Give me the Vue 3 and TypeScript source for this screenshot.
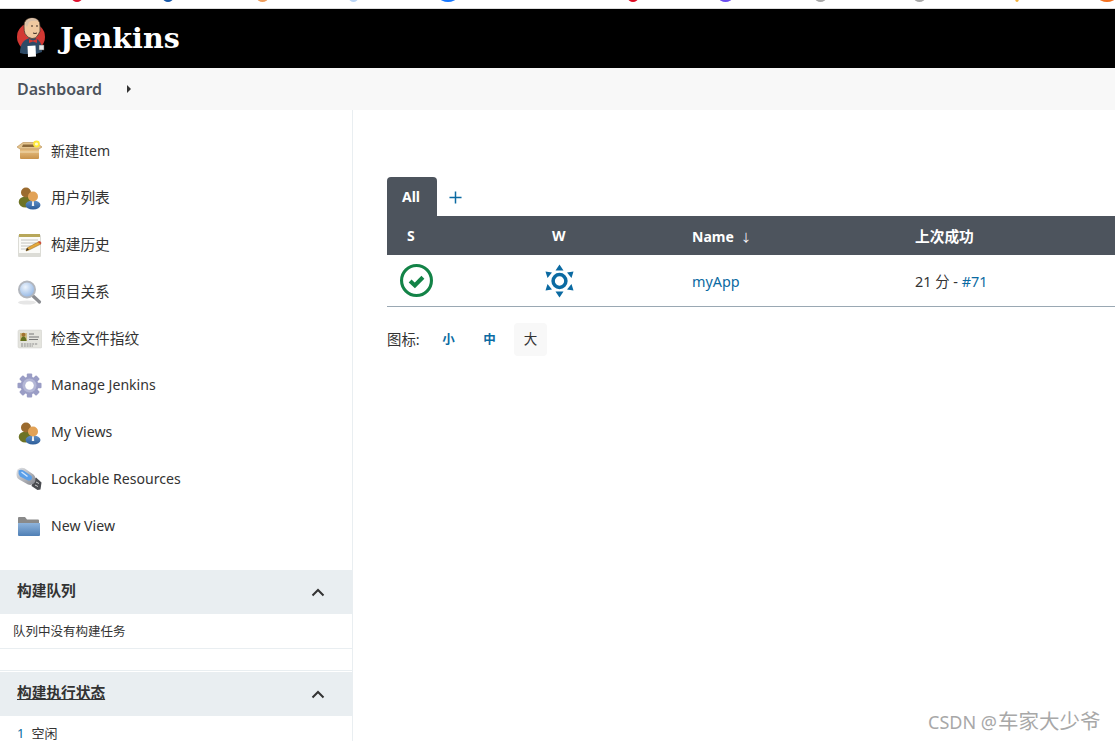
<script setup lang="ts">
const tabDots = [
  { x: 77, w: 10, c: '#e0102d' },
  { x: 168, w: 10, c: '#1657a8' },
  { x: 262, w: 11, c: '#ee9d5c' },
  { x: 353, w: 9, c: '#b9d4f5' },
  { x: 448, w: 16, c: '#1677ff' },
  { x: 633, w: 10, c: '#dd0a22' },
  { x: 725, w: 13, c: '#6a4cf0' },
  { x: 820, w: 11, c: '#a8a8a8' },
  { x: 919, w: 11, c: '#a8a8a8' },
  { x: 1017, w: 4, c: '#f4b23c' },
  { x: 1107, w: 16, c: '#f4701f' },
]

const tasks = [
  { icon: 'i-box', label: '新建Item', zh: false },
  { icon: 'i-users', label: '用户列表', zh: true },
  { icon: 'i-notepad', label: '构建历史', zh: true },
  { icon: 'i-search', label: '项目关系', zh: true },
  { icon: 'i-card', label: '检查文件指纹', zh: true },
  { icon: 'i-gear', label: 'Manage Jenkins', zh: false },
  { icon: 'i-users', label: 'My Views', zh: false },
  { icon: 'i-usb', label: 'Lockable Resources', zh: false },
  { icon: 'i-folder', label: 'New View', zh: false },
]
</script>

<template>
  <div class="page">
    <svg class="sprite" width="0" height="0" aria-hidden="true">
      <defs>
        <linearGradient id="g-box" x1="0" y1="0" x2="0" y2="1">
          <stop offset="0" stop-color="#ecc98f" />
          <stop offset="1" stop-color="#c9924a" />
        </linearGradient>
        <linearGradient id="g-blue" x1="0" y1="0" x2="0" y2="1">
          <stop offset="0" stop-color="#5f8fc6" />
          <stop offset="1" stop-color="#2c5c98" />
        </linearGradient>
        <linearGradient id="g-folder" x1="0" y1="0" x2="0" y2="1">
          <stop offset="0" stop-color="#8fb4dc" />
          <stop offset="1" stop-color="#4f7fb5" />
        </linearGradient>
        <linearGradient id="g-metal" x1="0" y1="0" x2="1" y2="1">
          <stop offset="0" stop-color="#e4e5e8" />
          <stop offset="1" stop-color="#84868d" />
        </linearGradient>
        <radialGradient id="g-lens" cx="0.4" cy="0.35" r="0.7">
          <stop offset="0" stop-color="#eef5fd" />
          <stop offset="1" stop-color="#8db2e2" />
        </radialGradient>
      </defs>
      <symbol id="i-box" viewBox="0 0 26 26">
        <path d="M4 10h19v10q0 1-1 1H5q-1 0-1-1z" fill="url(#g-box)" />
        <path d="M1 9l6-4.500 13 0 6 4.500-3 2H4z" fill="#e3c48f" stroke="#b98c4d" stroke-width=".6" />
        <path d="M7 6.500h11l2 2.500H6z" fill="#8c6a3a" />
        <path d="M4 14h19" stroke="#f3ddb4" stroke-width="1" />
        <circle cx="20.500" cy="6" r="3.400" fill="#ffe93a" />
        <circle cx="20.500" cy="6" r="1.600" fill="#fffbd0" />
      </symbol>
      <symbol id="i-users" viewBox="0 0 26 26">
        <ellipse cx="9.500" cy="17" rx="6.800" ry="5.500" fill="#6d7325" />
        <circle cx="10" cy="7.500" r="5" fill="#9b6b2f" />
        <ellipse cx="17" cy="20" rx="7.500" ry="4.500" fill="url(#g-blue)" />
        <path d="M16.200 16h1.600l.4 5h-2.400z" fill="#f2f2f2" />
        <circle cx="17" cy="11.500" r="5" fill="#e2a256" />
      </symbol>
      <symbol id="i-notepad" viewBox="0 0 26 26">
        <rect x="2" y="3" width="23" height="22" rx="1" fill="#dcdcd6" />
        <rect x="3" y="4" width="21" height="17" fill="#fbfbf8" />
        <rect x="3" y="2" width="21" height="3" fill="#b7a75a" />
        <path d="M5 8h17M5 11h15M5 14h10M5 17h8" stroke="#c4c4c0" stroke-width="1" />
        <path d="M10 19l1-3 12-6.500 2 2.500-12 6z" fill="#e5a83b" stroke="#8a6420" stroke-width=".5" />
        <path d="M22 10l2-1 1.500 2-1 1.200z" fill="#cf4c3c" />
        <path d="M10 19l1-3 2 1.500z" fill="#3a3020" />
      </symbol>
      <symbol id="i-search" viewBox="0 0 26 26">
        <ellipse cx="11" cy="23.500" rx="9" ry="2" fill="#e6e6e6" />
        <path d="M16.500 16.500l7 6.500" stroke="#8b8d92" stroke-width="3.200" stroke-linecap="round" />
        <circle cx="11" cy="10.500" r="8" fill="url(#g-lens)" stroke="#b2b6bd" stroke-width="2" />
      </symbol>
      <symbol id="i-card" viewBox="0 0 26 26">
        <rect x="2" y="4" width="24" height="18" rx="1.500" fill="#e4e4de" stroke="#cfcfc9" stroke-width=".5" />
        <rect x="4" y="7" width="7" height="8" fill="#cdbb84" />
        <circle cx="7.500" cy="8.800" r="2" fill="#a2722f" />
        <path d="M4.500 15q.5-4.500 3-4.500t3 4.500z" fill="#62701f" />
        <path d="M13 8h5M13 11h10M13 13.500h9" stroke="#777" stroke-width="1" />
        <path d="M5 18h17M5 20h12" stroke="#8c8c8c" stroke-width="1" stroke-dasharray="2 .8" />
      </symbol>
      <symbol id="i-gear" viewBox="0 0 26 26">
        <g fill="#9a9dc5">
          <circle cx="13.500" cy="12.500" r="9" />
          <rect x="10.800" y="0.500" width="5.400" height="24" rx="1" />
          <rect x="10.800" y="0.500" width="5.400" height="24" rx="1" transform="rotate(45 13.500 12.500)" />
          <rect x="10.800" y="0.500" width="5.400" height="24" rx="1" transform="rotate(90 13.500 12.500)" />
          <rect x="10.800" y="0.500" width="5.400" height="24" rx="1" transform="rotate(135 13.500 12.500)" />
        </g>
        <circle cx="13.500" cy="12.500" r="7" fill="#b4b7d6" />
        <circle cx="13.500" cy="12.500" r="4.300" fill="#fff" />
      </symbol>
      <symbol id="i-usb" viewBox="0 0 26 26">
        <path d="M17 13.500l3-3 5.500 5-1 7-3 .5-6-4z" fill="#4a4c50" />
        <path d="M20 15l3 1.500M19 18l3 1.500" stroke="#c9c9c9" stroke-width="1" />
        <path d="M1.500 2.500q3-2.500 7-1.200l9 6.200q3 3 1.500 7.500-2.500 4-7 2.500L4 13q-3.500-1.500-3.500-5.500 0-3 1-5z" fill="url(#g-metal)" />
        <path d="M2.500 3.500q2.500-1.500 5 0l8 5.500q1.500 2-.5 4-2 1-4 0L4 9.500Q2 7.500 2.500 3.500z" fill="#5b9fe8" />
        <path d="M5.500 5l6 4.500" stroke="#cfe6ff" stroke-width="1.400" />
      </symbol>
      <symbol id="i-folder" viewBox="0 0 26 26">
        <path d="M2 4q0-1 1-1h6l2 2.500h11q1 0 1 1V12H2z" fill="#8a8a8a" />
        <path d="M2 9h22v12q0 1-1 1H3q-1 0-1-1z" fill="url(#g-folder)" />
      </symbol>
    </svg>

    <div class="tab-strip">
      <span
        v-for="d in tabDots"
        :key="d.x"
        class="tab-dot"
        :style="{ left: d.x - d.w / 2 + 'px', width: d.w + 'px', background: d.c }"
      />
    </div>

    <header class="top-bar">
      <svg class="logo" viewBox="14 14 36 46" aria-hidden="true">
        <circle cx="31" cy="37" r="14" fill="#d33833" />
        <path d="M20 53q0-13 10-15h5q7 2 7 14l-6 2H24z" fill="#2d4a66" />
        <path d="M24 26q0-8 8-8t8 8q1 6-2 9-2 4-6 3.500-5-.5-7-5-1-2-1-7.500z" fill="#f0c9a0" stroke="#4a3a30" stroke-width=".8" />
        <path d="M25 24q2-6 7-6 4 0 6 3-6-1-9 1-1 3-2 5z" fill="#d9c0a8" />
        <path d="M31 26h2M36 26h2M33 33q2 1 4 0" stroke="#3a2a22" stroke-width="1" fill="none" />
        <path d="M29 39l4 1.500 4-1.500v4l-4-1.500-4 1.500z" fill="#d33833" />
        <path d="M27.500 46l8-.5.500 11-8 .5z" fill="#fff" />
        <rect x="39" y="45" width="5" height="5" fill="#e9e9e9" stroke="#555" stroke-width=".5" />
      </svg>
      <span class="brand">Jenkins</span>
    </header>

    <nav class="breadcrumb">
      <a class="crumb">Dashboard</a>
      <span class="crumb-arrow" />
    </nav>

    <div class="body">
      <aside class="side-panel">
        <ul class="tasks">
          <li v-for="(t, i) in tasks" :key="i" class="task">
            <svg class="task-icon"><use :href="'#' + t.icon" /></svg>
            <span :class="{ zh: t.zh }">{{ t.label }}</span>
          </li>
        </ul>

        <section class="pane queue">
          <div class="pane-head">
            <span class="pane-title">构建队列</span>
            <svg class="chevron" viewBox="0 0 14 9"><path d="M1.500 7.500L7 2l5.500 5.500" /></svg>
          </div>
          <div class="pane-empty">队列中没有构建任务</div>
        </section>

        <section class="pane executors">
          <div class="pane-head">
            <a class="pane-title pane-link">构建执行状态</a>
            <svg class="chevron" viewBox="0 0 14 9"><path d="M1.500 7.500L7 2l5.500 5.500" /></svg>
          </div>
          <div class="executor"><span class="exec-num">1</span><span>空闲</span></div>
        </section>
      </aside>

      <main class="main">
        <div class="tabs">
          <span class="tab active">All</span>
          <svg class="add-tab" viewBox="0 0 14 14"><path d="M7 .5v13M.5 7h13" /></svg>
        </div>

        <div class="job-table">
          <div class="row head">
            <span class="cell-s">S</span>
            <span class="cell-w">W</span>
            <span class="head-name">Name <span class="sort">↓</span></span>
            <span class="head-zh">上次成功</span>
          </div>
          <div class="row job">
            <span class="cell-icon">
              <svg class="status" viewBox="0 0 32 32">
                <circle cx="16" cy="16" r="14.500" />
                <path d="M9.800 16.500l4.600 4.300 7.800-8" />
              </svg>
            </span>
            <span class="cell-icon">
              <svg class="weather" viewBox="0 0 30 34">
                <circle cx="14.500" cy="17" r="6.400" />
                <path class="ray" d="M14.500.5l4 6h-8zM14.500 33.500l-4-6h8zM.5 7.500l6.500 1-4.500 5.500zM28.500 7.500l-6.500 1 4.500 5.500zM.5 26.500l6.500-1-4.500-5.500zM28.500 26.500l-6.500-1 4.500-5.500z" />
              </svg>
            </span>
            <a class="link job-name">myApp</a>
            <span class="last">21 分 - <a class="link">#71</a></span>
          </div>
        </div>

        <div class="sizes">
          <span class="sizes-label">图标:</span>
          <a class="size">小</a>
          <a class="size">中</a>
          <span class="size current">大</span>
        </div>
      </main>
    </div>

    <div class="watermark">CSDN @<span class="wm-zh">车家大少爷</span></div>
  </div>
</template>

<style>
html,
body {
  margin: 0;
  background: #fff;
  overflow: hidden;
}
</style>

<style scoped>
.page {
  position: relative;
  width: 1115px;
  height: 741px;
  overflow: hidden;
  font-family: "Noto Sans", "Noto Sans CJK SC", sans-serif;
  color: #333;
  font-size: 14px;
}

.sprite {
  position: absolute;
}

.tab-strip {
  position: relative;
  height: 8px;
  border-bottom: 1px solid #dcdcdc;
  overflow: hidden;
}

.tab-dot {
  position: absolute;
  top: -6px;
  height: 8px;
  border-radius: 50%;
}

.top-bar {
  height: 59px;
  background: #000;
  display: flex;
  padding: 5px 0 0 14px;
  box-sizing: border-box;
}

.logo {
  width: 36px;
  height: 46px;
  flex: none;
}

.brand {
  margin: 4px 0 0 10px;
  color: #fff;
  font-family: "DejaVu Serif", serif;
  font-weight: 700;
  font-size: 28.5px;
  line-height: 40px;
}

.breadcrumb {
  height: 42px;
  background: #f8f8f8;
  display: flex;
  align-items: center;
  padding-left: 17px;
}

.crumb {
  color: #4d545d;
  font-weight: 600;
  font-size: 16px;
}

.crumb-arrow {
  margin-left: 25px;
  border-left: 4px solid #333;
  border-top: 4px solid transparent;
  border-bottom: 4px solid transparent;
}

.body {
  display: flex;
  height: 631px;
}

.side-panel {
  width: 353px;
  flex: none;
  box-sizing: border-box;
  border-right: 1px solid #e9eef1;
}

.tasks {
  list-style: none;
  margin: 0;
  padding: 17px 0 0;
}

.task {
  height: 47px;
  display: flex;
  align-items: center;
  padding-left: 16px;
  font-size: 14.1px;
}

.task > span {
  margin-left: -1px;
  padding-bottom: 2px;
}

.task > span.zh {
  font-size: 14.7px;
  padding-bottom: 3px;
}

.task-icon {
  width: 26px;
  height: 26px;
  margin-right: 10px;
  flex: none;
}

.pane-head {
  height: 44px;
  background: #e9eef1;
  display: flex;
  align-items: center;
  justify-content: space-between;
  padding: 0 27px 0 17px;
  font-weight: 700;
  color: #333;
}

.pane-title {
  font-size: 14.7px;
  padding-bottom: 6px;
}

.pane-link {
  text-decoration: underline;
}

.chevron {
  width: 14px;
  height: 9px;
  fill: none;
  stroke: #333;
  stroke-width: 2;
}

.queue {
  margin-top: 20px;
  border-bottom: 1px solid #e9eef1;
  padding-bottom: 21px;
}

.pane-empty {
  height: 34px;
  line-height: 36px;
  padding-left: 13px;
  font-size: 12.5px;
  border-bottom: 1px solid #e9eef1;
}

.executors {
  margin-top: 1px;
}

.executor {
  display: flex;
  gap: 7px;
  padding: 8px 0 0 17px;
  font-size: 13px;
  line-height: 18px;
}

.exec-num {
  color: #0b6aa2;
}

.main {
  flex: 1;
  min-width: 0;
  padding: 67px 0 0 34px;
}

.tabs {
  display: flex;
  align-items: center;
  height: 39px;
}

.tab {
  background: #4d545d;
  color: #fff;
  font-weight: 700;
  width: 48px;
  padding-right: 2px;
  height: 39px;
  line-height: 39px;
  text-align: center;
  border-radius: 4px 4px 0 0;
}

.add-tab {
  width: 13px;
  height: 13px;
  margin: 2px 0 0 12px;
  fill: none;
  stroke: #0b6aa2;
  stroke-width: 1.600;
}

.row {
  display: grid;
  grid-template-columns: 145px 160px 223px 1fr;
  align-items: center;
}

.head {
  height: 39px;
  background: #4d545d;
  color: #fff;
  font-weight: 700;
  font-size: 14px;
}

.head-name {
  padding-top: 2px;
}

.head-zh {
  font-size: 14.7px;
}

.sort {
  margin-left: 3px;
  font-weight: 400;
  font-size: 11px;
}

.cell-s {
  padding-left: 20px;
}

.cell-w {
  padding-left: 20px;
}

.job {
  height: 52px;
  border-bottom: 1px solid #9aa8b3;
  box-sizing: border-box;
  font-size: 14.4px;
}

.cell-icon {
  display: flex;
  padding-left: 13px;
}

.status {
  width: 33px;
  height: 33px;
  fill: none;
  stroke: #138347;
}

.status circle {
  stroke-width: 3;
}

.status path {
  stroke-width: 4;
}

.weather {
  width: 30px;
  height: 34px;
  fill: none;
  stroke: #0b6aa2;
}

.weather circle {
  stroke-width: 3.500;
}

.weather .ray {
  fill: #0b6aa2;
  stroke: none;
}

.job-name {
  padding-top: 1px;
}

.link {
  color: #0b6aa2;
}

.sizes {
  display: flex;
  align-items: center;
  margin-top: 16px;
  height: 33px;
}

.sizes-label {
  width: 45px;
  font-size: 14.4px;
  padding-bottom: 3px;
}

.size {
  width: 33px;
  height: 33px;
  line-height: 33px;
  text-align: center;
  margin-right: 8px;
  color: #0b6aa2;
  font-weight: 700;
  font-size: 12.500px;
}

.size.current {
  color: #333;
  font-weight: 400;
  font-size: 13.5px;
  background: #f8f8f8;
  border-radius: 4px;
  line-height: 32px;
}

.watermark {
  position: absolute;
  left: 928px;
  top: 708px;
  font-size: 18px;
  line-height: 26px;
  color: #a8a8a8;
  white-space: nowrap;
}

.wm-zh {
  font-size: 20.5px;
  margin-left: 1px;
}
</style>
